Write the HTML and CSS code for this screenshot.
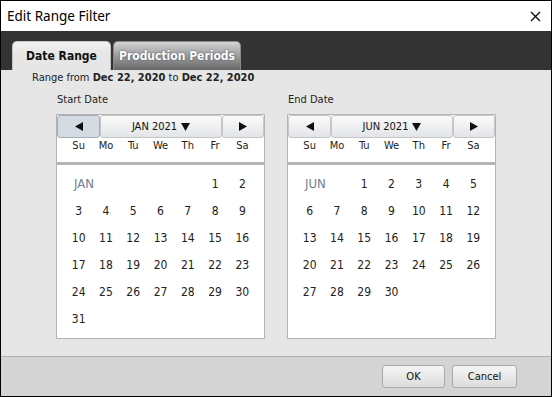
FILE: index.html
```html
<!DOCTYPE html>
<html lang="en">
<head>
  <meta charset="UTF-8">
  <title>Edit Range Filter</title>
  <link rel="stylesheet" href="styles.css">
</head>
<body>
<div class="dialog">
  <div class="titlebar">
    <span class="title">Edit Range Filter</span>
    <span class="close">
      <svg width="11" height="11" viewBox="0 0 11 11"><path d="M1 1 L10 10 M10 1 L1 10" stroke="#111" stroke-width="1.4" fill="none"/></svg>
    </span>
  </div>

  <div class="tabbar">
    <div class="tab active">Date Range</div>
    <div class="tab">Production Periods</div>
  </div>

  <div class="content">
    <div class="range-text">Range from <b>Dec 22, 2020</b> to <b>Dec 22, 2020</b></div>

    <div class="pickers">
      <div class="picker">
        <div class="picker-label">Start Date</div>
        <div class="calendar">
          <div class="cal-head">
            <div class="cal-btn pressed"><svg class="arrow" width="8" height="9" viewBox="0 0 8 9"><path d="M8 0 L8 9 L0 4.5 Z"/></svg></div>
            <div class="cal-btn">JAN 2021 <svg class="caret" width="9" height="8" viewBox="0 0 9 8"><path d="M0 0 L9 0 L4.5 8 Z"/></svg></div>
            <div class="cal-btn"><svg class="arrow" width="8" height="9" viewBox="0 0 8 9"><path d="M0 0 L0 9 L8 4.5 Z"/></svg></div>
          </div>
          <div class="weekdays">
            <span>Su</span><span>Mo</span><span>Tu</span><span>We</span><span>Th</span><span>Fr</span><span>Sa</span>
          </div>
          <div class="days">
            <span class="month-name span5">JAN</span>
            <span>1</span><span>2</span>
            <span>3</span><span>4</span><span>5</span><span>6</span><span>7</span><span>8</span><span>9</span>
            <span>10</span><span>11</span><span>12</span><span>13</span><span>14</span><span>15</span><span>16</span>
            <span>17</span><span>18</span><span>19</span><span>20</span><span>21</span><span>22</span><span>23</span>
            <span>24</span><span>25</span><span>26</span><span>27</span><span>28</span><span>29</span><span>30</span>
            <span>31</span>
          </div>
        </div>
      </div>

      <div class="picker">
        <div class="picker-label">End Date</div>
        <div class="calendar">
          <div class="cal-head">
            <div class="cal-btn"><svg class="arrow" width="8" height="9" viewBox="0 0 8 9"><path d="M8 0 L8 9 L0 4.5 Z"/></svg></div>
            <div class="cal-btn">JUN 2021 <svg class="caret" width="9" height="8" viewBox="0 0 9 8"><path d="M0 0 L9 0 L4.5 8 Z"/></svg></div>
            <div class="cal-btn"><svg class="arrow" width="8" height="9" viewBox="0 0 8 9"><path d="M0 0 L0 9 L8 4.5 Z"/></svg></div>
          </div>
          <div class="weekdays">
            <span>Su</span><span>Mo</span><span>Tu</span><span>We</span><span>Th</span><span>Fr</span><span>Sa</span>
          </div>
          <div class="days">
            <span class="month-name span2">JUN</span>
            <span>1</span><span>2</span><span>3</span><span>4</span><span>5</span>
            <span>6</span><span>7</span><span>8</span><span>9</span><span>10</span><span>11</span><span>12</span>
            <span>13</span><span>14</span><span>15</span><span>16</span><span>17</span><span>18</span><span>19</span>
            <span>20</span><span>21</span><span>22</span><span>23</span><span>24</span><span>25</span><span>26</span>
            <span>27</span><span>28</span><span>29</span><span>30</span>
          </div>
        </div>
      </div>
    </div>
  </div>

  <div class="footer">
    <button class="dlg-button">OK</button>
    <button class="dlg-button">Cancel</button>
  </div>
</div>
</body>
</html>
```

FILE: styles.css
```css
* {
  box-sizing: border-box;
}

body {
  margin: 0;
  font-family: 'DejaVu Sans Condensed', 'DejaVu Sans', sans-serif;
  font-size: 11px;
  color: #222;
}

.dialog {
  width: 552px;
  height: 397px;
  border: 1px solid #000;
  display: flex;
  flex-direction: column;
  background-color: #fff;
}

.titlebar {
  height: 30px;
  display: flex;
  align-items: center;
  justify-content: space-between;
  padding: 0 10px 0 6px;
  background-color: #fff;
}

.title {
  font-family: 'Noto Sans', sans-serif;
  font-size: 13.5px;
  color: #000;
}

.close {
  display: flex;
}

.tabbar {
  height: 39px;
  background-color: #333;
  display: flex;
  align-items: flex-end;
  gap: 2px;
  padding-left: 11px;
}

.tab {
  height: 29px;
  display: flex;
  align-items: center;
  justify-content: center;
  font-weight: bold;
  font-size: 12px;
  border-radius: 5px 5px 0 0;
}

.tab.active {
  width: 99px;
  color: #111;
  background: linear-gradient(#f2f2f2, #e6e6e6 40%);
  border: 1px solid #c4c4c4;
  border-bottom: none;
}

.tab:not(.active) {
  width: 128px;
  color: #fff;
  background: linear-gradient(#d4d4d4, #a0a0a0 45%, #686868);
  border: 1px solid #8a8a8a;
  border-bottom: none;
  text-shadow: 0 0 2px #3a4a66;
}

.content {
  height: 286px;
  background-color: #e6e6e6;
  padding-top: 1px;
}

.range-text {
  line-height: 14px;
  padding-left: 31px;
}

.pickers {
  display: flex;
  gap: 22px;
  padding-left: 55px;
  margin-top: 8px;
}

.picker-label {
  line-height: 14px;
  padding-left: 1px;
  margin-bottom: 7px;
}

.calendar {
  width: 209px;
  height: 225px;
  border: 1px solid #b4b4b4;
  background-color: #fff;
}

.cal-head {
  display: grid;
  grid-template-columns: 43px 1fr 42px;
  height: 23px;
}

.cal-btn {
  display: flex;
  align-items: center;
  justify-content: center;
  gap: 4px;
  border: 1px solid #c6c6c6;
  border-radius: 3px;
  background: linear-gradient(#fbfbfb, #e2e4e7);
  font-size: 11px;
  color: #111;
}

.cal-btn svg {
  fill: #111;
}

.cal-btn.pressed {
  background: #d4dbe3;
  border-color: #a3adb8;
}

.weekdays {
  display: grid;
  grid-template-columns: repeat(7, 1fr);
  height: 27px;
  padding: 1px 8px 0;
  border-bottom: 3px solid #b4b4b4;
  line-height: 14px;
  text-align: center;
}

.days {
  display: grid;
  grid-template-columns: repeat(7, 1fr);
  grid-auto-rows: 27px;
  padding: 5px 8px 0;
  font-size: 12px;
}

.days span {
  display: flex;
  align-items: center;
  justify-content: center;
}

.days .month-name {
  justify-content: flex-start;
  padding-left: 9px;
  font-size: 13px;
  color: #6f7e8f;
}

.span5 {
  grid-column: span 5;
}

.span2 {
  grid-column: span 2;
}

.footer {
  height: 40px;
  border-top: 1px solid #b0b0b0;
  background-color: #d4d4d4;
  display: flex;
  justify-content: flex-end;
  align-items: flex-start;
  gap: 7px;
  padding: 8px 34px 0 0;
}

.dlg-button {
  height: 23px;
  width: 63px;
  font-family: inherit;
  font-size: 11px;
  color: #111;
  border: 1px solid #a9a9a9;
  border-radius: 3px;
  background: linear-gradient(#f5f5f5, #dcdcdc);
  padding: 0;
}

.dlg-button + .dlg-button {
  width: 65px;
}
```
